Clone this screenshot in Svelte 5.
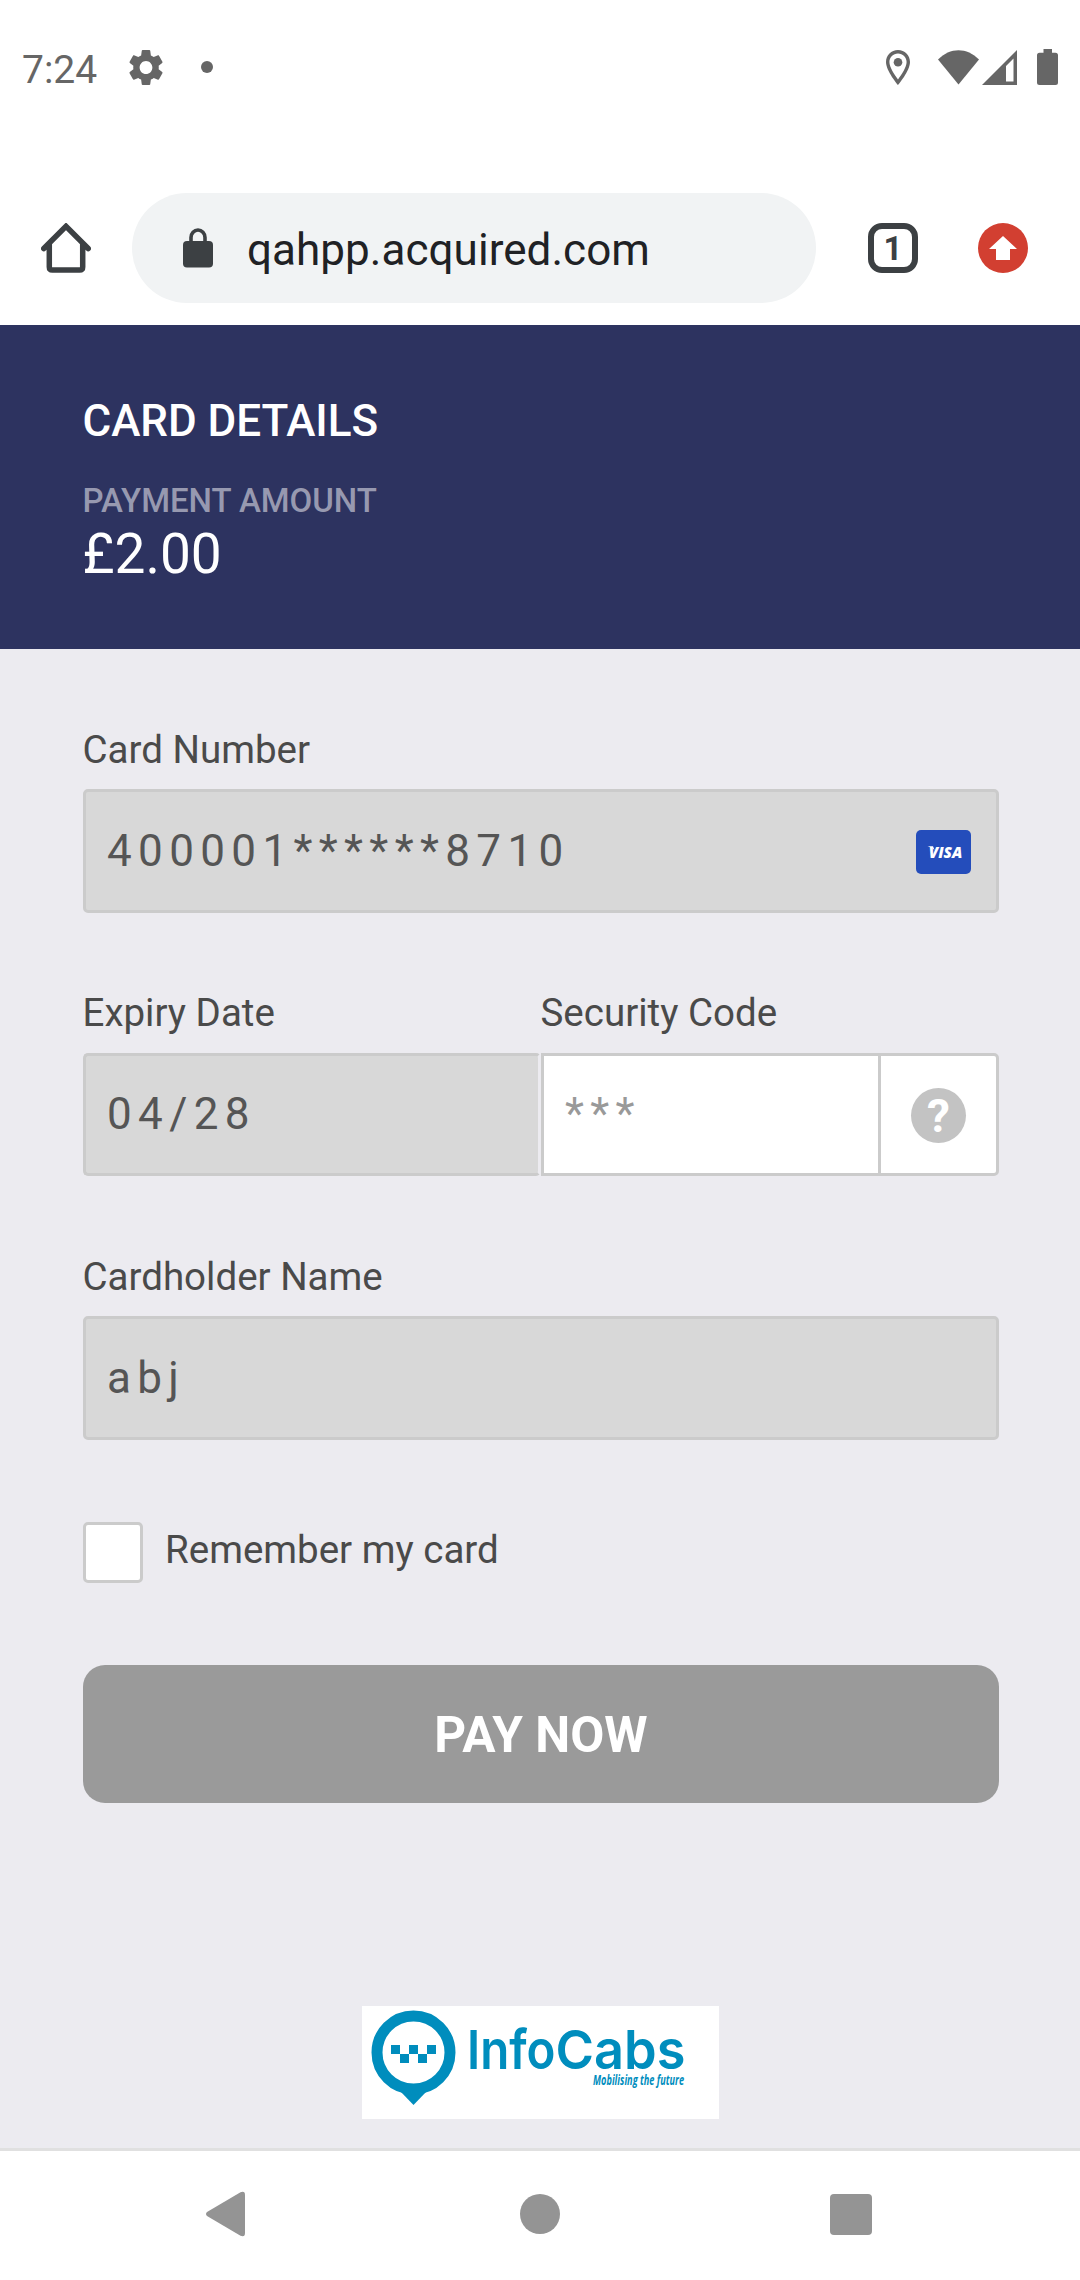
<script>
  const tabCount = 1;
  const url = 'qahpp.acquired.com';
  const card = { number: '400001******8710', expiry: '04/28', holder: 'abj' };
</script>

<div class="screen">
  <header class="status">
    <span class="time">7:24</span>
    <svg class="gear" width="34" height="35" viewBox="2.4 2.4 19.2 19.2" preserveAspectRatio="none">
      <path
        d="M19.14 12.94c.04-.3.06-.61.06-.94 0-.32-.02-.64-.07-.94l2.03-1.58c.18-.14.23-.41.12-.61l-1.92-3.32c-.12-.22-.37-.29-.59-.22l-2.390.96c-.5-.38-1.030-.7-1.620-.94l-.36-2.540c-.04-.24-.24-.41-.48-.41h-3.840c-.24 0-.43.17-.47.41l-.36 2.540c-.59.24-1.130.57-1.620.94l-2.390-.96c-.22-.08-.47 0-.59.22L2.740 8.870c-.12.21-.08.47.12.61l2.030 1.580c-.05.3-.09.63-.09.94s.02.64.07.94l-2.030 1.580c-.18.14-.23.41-.12.61l1.920 3.320c.12.22.37.29.59.22l2.390-.96c.5.38 1.030.7 1.620.94l.36 2.540c.05.24.24.41.48.41h3.840c.24 0 .44-.17.47-.41l.36-2.540c.59-.24 1.130-.56 1.620-.94l2.390.96c.22.08.47 0 .59-.22l1.920-3.320c.12-.22.07-.47-.12-.61l-2.010-1.580zM12 15.600c-1.980 0-3.600-1.620-3.600-3.600s1.620-3.600 3.600-3.600 3.600 1.620 3.600 3.600-1.620 3.600-3.600 3.600z"
      />
    </svg>
    <span class="dot"></span>
    <span class="grow"></span>
    <svg class="pin" width="24" height="35" viewBox="0 0 24 35">
      <path
        fill-rule="evenodd"
        d="M12 0C5.2 0 0 5.3 0 12C0 21 12 35 12 35S24 21 24 12C24 5.3 18.800 0 12 0ZM12 3.500C16.800 3.500 20.600 7.300 20.600 12C20.600 17 15.500 25 12 29.400C8.500 25 3.400 17 3.400 12C3.400 7.300 7.200 3.500 12 3.500Z"
      />
      <circle cx="12" cy="12.200" r="4.300" />
    </svg>
    <svg class="wifi" width="41" height="35" viewBox="0 0 41 35">
      <path d="M0 9.500C12-3 29-3 41 9.500L20.500 34.500Z" />
    </svg>
    <svg class="signal" width="35" height="35" viewBox="0 0 35 35">
      <path fill-rule="evenodd" d="M35 0V35H0ZM31.500 8.500L24 16V31.500H31.500Z" />
    </svg>
    <svg class="battery" width="21" height="36" viewBox="0 0 21 36">
      <path d="M6.500 0H15V3.800H18.500Q21 3.800 21 6.300V33.500Q21 36 18.500 36H2.500Q0 36 0 33.500V6.300Q0 3.800 2.500 3.800H6.500Z" />
    </svg>
  </header>

  <div class="toolbar">
    <svg class="home" width="50" height="50" viewBox="0 0 50 50">
      <path d="M2.800 25.500L25 3.300L47.200 25.500M8.300 21V44Q8.300 47 11.300 47H38.700Q41.700 47 41.700 44V21" />
    </svg>
    <div class="omnibox">
      <svg class="lock" width="30" height="40" viewBox="0 0 30 40">
        <rect y="13" width="30" height="26.500" rx="4" />
        <path d="M8 15V9.500A7 7.500 0 0 1 22 9.500V15" />
      </svg>
      <span class="url">{url}</span>
    </div>
    <span class="tabs">{tabCount}</span>
    <svg class="update" width="50" height="50" viewBox="0 0 50 50">
      <circle cx="25" cy="25" r="25" />
      <path d="M25 13L39 26H32V37H18V26H11Z" />
    </svg>
  </div>

  <section class="summary">
    <h1>CARD DETAILS</h1>
    <p class="caption">PAYMENT AMOUNT</p>
    <p class="amount">£2.00</p>
  </section>

  <main>
    <div class="label">Card Number</div>
    <div class="field disabled">
      <span class="value">{card.number}</span>
      <svg class="visa" width="55" height="44" viewBox="0 0 55 44">
        <rect width="55" height="44" rx="5" />
        <path d="M11.500 16.300H17L18.500 20L15.800 17.700Z" />
        <text x="12.800" y="28" textLength="33.500" lengthAdjust="spacingAndGlyphs">VISA</text>
      </svg>
    </div>

    <div class="pair">
      <div class="expiry">
        <div class="label">Expiry Date</div>
        <div class="field disabled"><span class="value">{card.expiry}</span></div>
      </div>
      <div class="security">
        <div class="label">Security Code</div>
        <div class="field code">
          <span class="value placeholder">***</span>
          <span class="help"><span class="badge">?</span></span>
        </div>
      </div>
    </div>

    <div class="label holder">Cardholder Name</div>
    <div class="field disabled"><span class="value">{card.holder}</span></div>

    <div class="remember">
      <span class="box"></span>
      <span class="text">Remember my card</span>
    </div>

    <button type="button">PAY NOW</button>

    <div class="brand">
      <svg width="357" height="113" viewBox="0 0 357 113">
        <path d="M38 85L51.500 99L65 85Z" />
        <circle class="ring" cx="51.500" cy="46.500" r="36.500" />
        <path d="M29 39H38V48H29ZM47 39H56V48H47ZM65 39H74V48H65ZM38 48H47V57H38ZM56 48H65V57H56Z" />
        <text class="name" y="63"><tspan x="105" textLength="88.500" lengthAdjust="spacingAndGlyphs">Info</tspan><tspan x="193.500" textLength="130" lengthAdjust="spacingAndGlyphs">Cabs</tspan></text>
        <text class="tag" x="231" y="79" textLength="91" lengthAdjust="spacingAndGlyphs">Mobilising the future</text>
      </svg>
    </div>
  </main>

  <nav>
    <svg class="back" width="39" height="46" viewBox="0 0 39 46">
      <path d="M1 21L34.500 1.200Q39 -.5 39 4V42Q39 46.500 34.500 44.800L1 25Q-1 23 1 21Z" />
    </svg>
    <span class="circle"></span>
    <span class="square"></span>
  </nav>
</div>

<style>
  :global(body) {
    margin: 0;
    background: #fff;
  }
  .screen {
    box-sizing: border-box;
    width: 1080px;
    height: 2280px;
    display: flex;
    flex-direction: column;
    font-family: Roboto, 'Liberation Sans', sans-serif;
    color: #4a4a4a;
    overflow: hidden;
  }
  svg {
    display: block;
    flex: none;
  }

  .status {
    height: 134px;
    display: flex;
    align-items: center;
    padding: 0 22px;
    fill: #666;
    color: #666;
  }
  .time {
    font-size: 39px;
    line-height: 46px;
    width: 107px;
    margin-top: 5px;
  }
  .dot {
    width: 12px;
    height: 12px;
    border-radius: 50%;
    background: #666;
    margin-left: 38px;
  }
  .grow {
    flex: 1;
  }
  .wifi {
    margin-left: 28px;
  }
  .signal {
    margin-left: 3px;
  }
  .battery {
    margin-left: 20px;
  }

  .toolbar {
    height: 191px;
    box-sizing: border-box;
    padding: 59px 52px 22px 41px;
    display: flex;
    align-items: center;
  }
  .home {
    fill: none;
    stroke: #3c4043;
    stroke-width: 5.500;
    stroke-linecap: round;
  }
  .omnibox {
    width: 684px;
    height: 110px;
    box-sizing: border-box;
    margin-left: 41px;
    padding-left: 51px;
    border-radius: 55px;
    background: #f1f3f4;
    display: flex;
    align-items: center;
  }
  .lock rect {
    fill: #3c4043;
  }
  .lock path {
    fill: none;
    stroke: #3c4043;
    stroke-width: 3.600;
  }
  .url {
    margin: 3px 0 0 34px;
    font-size: 44px;
    line-height: 54px;
    letter-spacing: 0.05px;
    color: #202124;
  }
  .tabs {
    width: 50px;
    height: 50px;
    box-sizing: border-box;
    border: 6px solid #3c4043;
    border-radius: 14px;
    margin-left: 52px;
    color: #3c4043;
    font-size: 33px;
    line-height: 39px;
    font-weight: 700;
    text-align: center;
  }
  .update {
    margin-left: 60px;
  }
  .update circle {
    fill: #d23f31;
  }
  .update path {
    fill: #fff;
  }

  .summary {
    height: 324px;
    box-sizing: border-box;
    padding: 70px 82.500px 0;
    background: #2d3360;
    color: #fff;
  }
  h1 {
    margin: 0;
    font-size: 44px;
    line-height: 52px;
    font-weight: 500;
    letter-spacing: -0.05px;
  }
  p {
    margin: 0;
  }
  .caption {
    margin-top: 34px;
    font-size: 33px;
    line-height: 40px;
    font-weight: 500;
    letter-spacing: -0.05px;
    color: #9799b0;
  }
  .amount {
    font-size: 55px;
    line-height: 66px;
  }

  main {
    height: 1499px;
    box-sizing: border-box;
    padding: 78px 81px 0 83px;
    background: #ecebf0;
    display: flex;
    flex-direction: column;
  }
  .label {
    font-size: 38.500px;
    line-height: 46px;
    margin-bottom: 16px;
    margin-left: -0.5px;
  }
  .field {
    height: 124px;
    box-sizing: border-box;
    border: 3px solid #cbcbcb;
    border-radius: 5px;
    background: #fff;
    display: flex;
    align-items: center;
    justify-content: space-between;
    padding-left: 21px;
  }
  .disabled {
    background: #d8d8d8;
  }
  .value {
    font-size: 44px;
    line-height: 54px;
    letter-spacing: 6.350px;
    color: #555;
  }
  .placeholder {
    color: #999;
  }
  .visa {
    margin-right: 25px;
    margin-top: 1px;
  }
  .visa rect {
    fill: #244dbb;
  }
  .visa path {
    fill: #fff;
  }
  .visa text {
    fill: #fff;
    font: italic 800 16.500px 'Open Sans', sans-serif;
  }
  .pair {
    display: flex;
    margin-top: 77px;
  }
  .pair .label {
    margin-bottom: 17px;
  }
  .pair .field {
    height: 123px;
  }
  .pair .value {
    margin-bottom: 1px;
  }
  .expiry {
    width: 458px;
  }
  .expiry .field {
    border-right-color: #ecebf0;
  }
  .security {
    flex: 1;
  }
  .code {
    border-radius: 0 5px 5px 0;
    align-items: stretch;
  }
  .code .value {
    align-self: center;
  }
  .help {
    width: 115px;
    border-left: 3px solid #cbcbcb;
    display: flex;
    align-items: center;
    justify-content: center;
  }
  .badge {
    width: 55px;
    height: 55px;
    margin-top: 2px;
    border-radius: 50%;
    background: #c3c3c3;
    color: #fff;
    font-size: 46px;
    font-weight: 700;
    line-height: 57px;
    text-align: center;
  }
  .holder {
    margin-top: 78px;
  }
  .remember {
    margin-top: 82px;
    height: 61px;
    display: flex;
    align-items: center;
  }
  .box {
    width: 60px;
    height: 61px;
    box-sizing: border-box;
    border: 3px solid #cbcbcb;
    border-radius: 5px;
    background: #fff;
  }
  .text {
    margin: 0 0 6px 22px;
    font-size: 38.500px;
    line-height: 46px;
  }
  button {
    margin: 82px 0 0;
    height: 138px;
    padding: 2px 0 0;
    border: 0;
    border-radius: 22px;
    background: #9a9a9a;
    color: #fff;
    font: 700 49.500px/60px Roboto, 'Liberation Sans', sans-serif;
  }
  .brand {
    align-self: center;
    margin: 203px 2px 0 0;
    background: #fff;
    fill: #008dbd;
  }
  .ring {
    fill: #fff;
    stroke: #008dbd;
    stroke-width: 11;
  }
  .name {
    font: 600 54px Inter, sans-serif;
  }
  .tag {
    font: italic 700 13.500px 'Open Sans', sans-serif;
  }

  nav {
    height: 132px;
    box-sizing: border-box;
    border-top: 3px solid #e0e0e0;
    padding: 0 0 3px 206px;
    background: #fff;
    fill: #949494;
    display: flex;
    align-items: center;
  }
  .circle {
    width: 40px;
    height: 40px;
    border-radius: 50%;
    background: #949494;
    margin-left: 275px;
  }
  .square {
    width: 42px;
    height: 41px;
    border-radius: 4px;
    background: #949494;
    margin-left: 270px;
  }
</style>
